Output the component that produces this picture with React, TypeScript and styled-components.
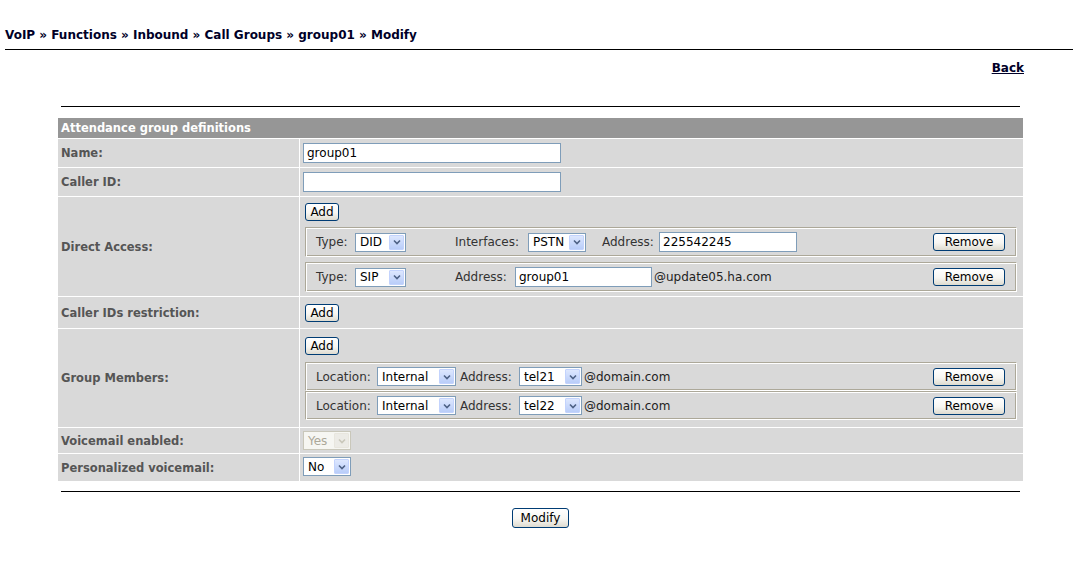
import React from 'react'
import styled, { createGlobalStyle } from 'styled-components'

const GlobalStyle = createGlobalStyle`
  body {
    margin: 0;
    background: #fff;
    font-family: 'DejaVu Sans', Verdana, sans-serif;
  }
`

const Page = styled.div`
  width: 1074px;
`

const Crumbs = styled.div`
  margin: 0 1px 0 5px;
  padding-top: 27px;
  padding-bottom: 6px;
  border-bottom: 1px solid #000;
  font-size: 12px;
  line-height: 16px;
  font-weight: bold;
  color: #000028;
`

const Main = styled.div`
  width: 965px;
  margin-left: 58px;
`

const BackRow = styled.div`
  display: flex;
  justify-content: flex-end;
  padding-top: 11px;
`

const BackLink = styled.a`
  font-size: 12px;
  line-height: 14px;
  font-weight: bold;
  color: #000028;
  text-decoration: underline;
  margin-right: -1px;
`

const Rule = styled.div<{ $top: number }>`
  margin: ${({ $top }) => $top}px 3px 0;
  border-top: 1px solid #000;
`

const Table = styled.div`
  display: grid;
  grid-template-columns: 241px 1fr;
  grid-template-rows: 20px 28px 28px 99px 31px 98px 25px 27px;
  gap: 1px;
  margin-top: 11px;
`

const Head = styled.div`
  grid-column: 1 / span 2;
  background: #969696;
  color: #fff;
  font-size: 11.5px;
  font-weight: bold;
  line-height: 20px;
  padding-left: 3px;
`

const Label = styled.div`
  background: #d9d9d9;
  color: #555;
  font-size: 11.5px;
  font-weight: bold;
  display: flex;
  align-items: center;
  padding-left: 3px;
`

const Value = styled.div<{ $pad: string }>`
  background: #d9d9d9;
  padding: ${({ $pad }) => $pad};
  display: flex;
  flex-direction: column;
  align-items: flex-start;
`

const TextInput = styled.input<{ $width: number }>`
  box-sizing: border-box;
  width: ${({ $width }) => $width}px;
  height: 20px;
  margin: 0;
  border: 1px solid #7f9db9;
  background: #fff;
  padding: 0 3px;
  font-family: 'DejaVu Sans', Tahoma, sans-serif;
  font-size: 12px;
  color: #000;
  outline: none;
`

const Button = styled.button<{ $width: number; $height?: number }>`
  box-sizing: border-box;
  width: ${({ $width }) => $width}px;
  height: ${({ $height }) => $height ?? 18}px;
  margin: 0;
  padding: 0;
  border: 1px solid #003c74;
  border-radius: 3px;
  background: linear-gradient(180deg, #ffffff 0%, #f7f6f2 55%, #dedbd0 100%);
  font-family: 'DejaVu Sans', Tahoma, sans-serif;
  font-size: 12px;
  line-height: 14px;
  color: #000;
`

const List = styled.div<{ $gap: number; $top: number }>`
  align-self: stretch;
  display: flex;
  flex-direction: column;
  gap: ${({ $gap }) => $gap}px;
  margin-top: ${({ $top }) => $top}px;
`

const Entry = styled.div<{ $height: number }>`
  box-sizing: border-box;
  height: ${({ $height }) => $height}px;
  display: flex;
  align-items: center;
  padding: 0 11px 0 10px;
  border: 1px solid;
  border-color: #aca899 #fff #fff #aca899;
  box-shadow: inset 1px 1px 0 #fff, inset -1px -1px 0 #aca899;
  font-family: 'DejaVu Sans', Tahoma, sans-serif;
  font-size: 12px;
  color: #333;
`

const Field = styled.div<{ $width?: number }>`
  display: flex;
  align-items: center;
  width: ${({ $width }) => ($width ? `${$width}px` : 'auto')};
  flex: none;
`

const Caption = styled.span<{ $width: number }>`
  width: ${({ $width }) => $width}px;
  flex: none;
  white-space: nowrap;
`

const Suffix = styled.span`
  color: #222;
  margin-left: 2px;
`

const Spacer = styled.div`
  flex: 1;
`

const SelectBox = styled.div<{ $width: number; $disabled?: boolean }>`
  box-sizing: border-box;
  width: ${({ $width }) => $width}px;
  height: 19px;
  display: flex;
  align-items: center;
  border: 1px solid ${({ $disabled }) => ($disabled ? '#c9c7ba' : '#7f9db9')};
  background: ${({ $disabled }) => ($disabled ? '#f6f6f2' : '#fff')};
  padding: 1px;
  font-family: 'DejaVu Sans', Tahoma, sans-serif;
  font-size: 12px;
  color: ${({ $disabled }) => ($disabled ? '#aca899' : '#000')};
`

const SelectText = styled.span`
  flex: 1;
  padding-left: 3px;
  white-space: nowrap;
  overflow: hidden;
`

const Arrow = styled.span<{ $disabled?: boolean }>`
  box-sizing: border-box;
  width: 15px;
  height: 15px;
  display: flex;
  align-items: center;
  justify-content: center;
  border: 1px solid ${({ $disabled }) => ($disabled ? '#e8e6de' : '#c3d3fd')};
  border-radius: 1px;
  background: ${({ $disabled }) =>
    $disabled ? '#ecebe6' : 'linear-gradient(180deg, #dde7fe 0%, #b9cdf9 100%)'};
  color: ${({ $disabled }) => ($disabled ? '#c9c7ba' : '#4d6185')};
`

const Footer = styled.div`
  display: flex;
  justify-content: center;
  margin-top: 16px;
`

const Select = ({ width, value, disabled }: { width: number; value: string; disabled?: boolean }) => (
  <SelectBox $width={width} $disabled={disabled}>
    <SelectText>{value}</SelectText>
    <Arrow $disabled={disabled}>
      <svg width="8" height="6" viewBox="0 0 8 6">
        <path d="M1 1.5 L4 4.5 L7 1.5" fill="none" stroke="currentColor" strokeWidth="1.6" />
      </svg>
    </Arrow>
  </SelectBox>
)

const members = ['tel21', 'tel22']

export default function App() {
  return (
    <Page>
      <GlobalStyle />
      <Crumbs>VoIP » Functions » Inbound » Call Groups » group01 » Modify</Crumbs>
      <Main>
        <BackRow>
          <BackLink href="#">Back</BackLink>
        </BackRow>
        <Rule $top={31} />
        <Table>
          <Head>Attendance group definitions</Head>

          <Label>Name:</Label>
          <Value $pad="4px 3px">
            <TextInput $width={258} defaultValue="group01" />
          </Value>

          <Label>Caller ID:</Label>
          <Value $pad="4px 3px">
            <TextInput $width={258} defaultValue="" />
          </Value>

          <Label>Direct Access:</Label>
          <Value $pad="6px 6px 3px 5px">
            <Button $width={34}>Add</Button>
            <List $gap={5} $top={6}>
              <Entry $height={30}>
                <Field $width={139}>
                  <Caption $width={39}>Type:</Caption>
                  <Select width={51} value="DID" />
                </Field>
                <Field $width={147}>
                  <Caption $width={73}>Interfaces:</Caption>
                  <Select width={58} value="PSTN" />
                </Field>
                <Field>
                  <Caption $width={57}>Address:</Caption>
                  <TextInput $width={138} defaultValue="225542245" />
                </Field>
                <Spacer />
                <Button $width={72}>Remove</Button>
              </Entry>
              <Entry $height={30}>
                <Field $width={139}>
                  <Caption $width={39}>Type:</Caption>
                  <Select width={51} value="SIP" />
                </Field>
                <Field>
                  <Caption $width={60}>Address:</Caption>
                  <TextInput $width={137} defaultValue="group01" />
                  <Suffix>@update05.ha.com</Suffix>
                </Field>
                <Spacer />
                <Button $width={72}>Remove</Button>
              </Entry>
            </List>
          </Value>

          <Label>Caller IDs restriction:</Label>
          <Value $pad="7px 6px 6px 5px">
            <Button $width={34}>Add</Button>
          </Value>

          <Label>Group Members:</Label>
          <Value $pad="8px 6px 6px 5px">
            <Button $width={34}>Add</Button>
            <List $gap={0} $top={7}>
              {members.map((m) => (
                <Entry key={m} $height={29}>
                  <Field $width={144}>
                    <Caption $width={61}>Location:</Caption>
                    <Select width={79} value="Internal" />
                  </Field>
                  <Field>
                    <Caption $width={59}>Address:</Caption>
                    <Select width={63} value={m} />
                    <Suffix>@domain.com</Suffix>
                  </Field>
                  <Spacer />
                  <Button $width={72}>Remove</Button>
                </Entry>
              ))}
            </List>
          </Value>

          <Label>Voicemail enabled:</Label>
          <Value $pad="3px 3px">
            <Select width={48} value="Yes" disabled />
          </Value>

          <Label>Personalized voicemail:</Label>
          <Value $pad="3px 3px 4px">
            <Select width={48} value="No" />
          </Value>
        </Table>
        <Rule $top={10} />
        <Footer>
          <Button $width={57} $height={20}>Modify</Button>
        </Footer>
      </Main>
    </Page>
  )
}
